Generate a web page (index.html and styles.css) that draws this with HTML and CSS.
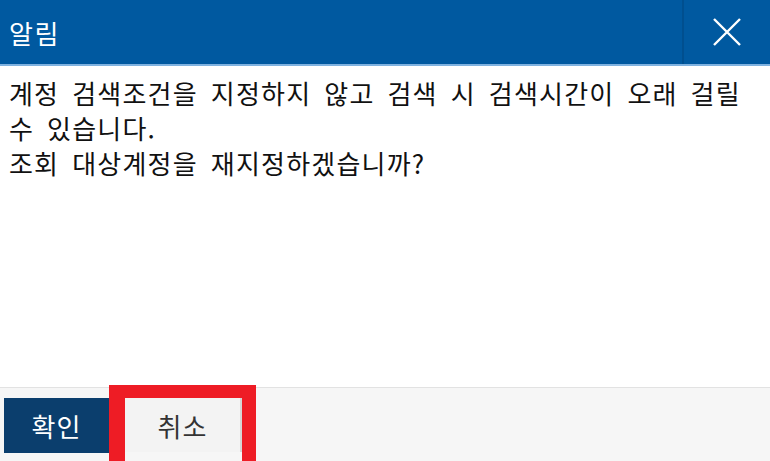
FILE: index.html
```html
<!DOCTYPE html>
<html lang="ko">
<head>
  <meta charset="UTF-8" />
  <meta name="viewport" content="width=device-width, initial-scale=1.0"/>
  <title>알림</title>
  <link rel="stylesheet" href="styles.css">
</head>
<body>
  <div class="dialog">
    <div class="head">
      <div class="title">알림</div>
      <div class="close">
        <svg width="30" height="30" viewBox="0 0 30 30"><path d="M2 2 L28 28 M28 2 L2 28" stroke="#fff" stroke-width="2.4" fill="none"/></svg>
      </div>
    </div>
    <div class="msg">
      계정 검색조건을 지정하지 않고 검색 시 검색시간이 오래 걸릴 수 있습니다.<br>
      조회 대상계정을 재지정하겠습니까?
    </div>
    <div class="foot">
      <button class="btn ok">확인</button>
      <div class="mark">
        <button class="btn cancel">취소</button>
      </div>
    </div>
  </div>
</body>
</html>
```
FILE: styles.css
```css
body { margin: 0; font-family: "Noto Sans CJK KR", "Noto Sans", sans-serif; background: #fff; }
.dialog { width: 770px; height: 461px; display: flex; flex-direction: column; overflow: hidden; }
.head { height: 64px; background: #0059a0; border-bottom: 2px solid #7fb2e0; display: flex; align-items: center; }
.title { flex: 1; color: #fff; font-size: 26px; letter-spacing: 1.5px; padding-left: 9px; }
.close { width: 86px; height: 64px; border-left: 2px solid #004f8f; display: flex; align-items: center; justify-content: center; }
.msg { flex: 1; padding: 9px 9px 0 9px; width: 748px; font-size: 26px; line-height: 35px; letter-spacing: 1.2px; word-spacing: 4.5px; word-break: keep-all; color: #111; }
.foot { height: 73px; background: #f6f6f6; border-top: 1px solid #e2e2e2; display: flex; align-items: flex-start; padding-left: 4px; }
.btn { font-family: inherit; font-size: 26px; letter-spacing: 1px; border: 0; margin: 0; padding: 0; cursor: pointer; }
.ok { width: 105px; height: 55px; margin-top: 10px; background: #0b3e6d; color: #fff; }
.mark { border: solid #ee1c25; border-width: 13px 14px 0 16px; margin-top: -3px; height: 64px; }
.cancel { width: 117px; height: 54px; background: #f3f3f3; color: #333; border-right: 2px solid #d6d6d6; }
```
